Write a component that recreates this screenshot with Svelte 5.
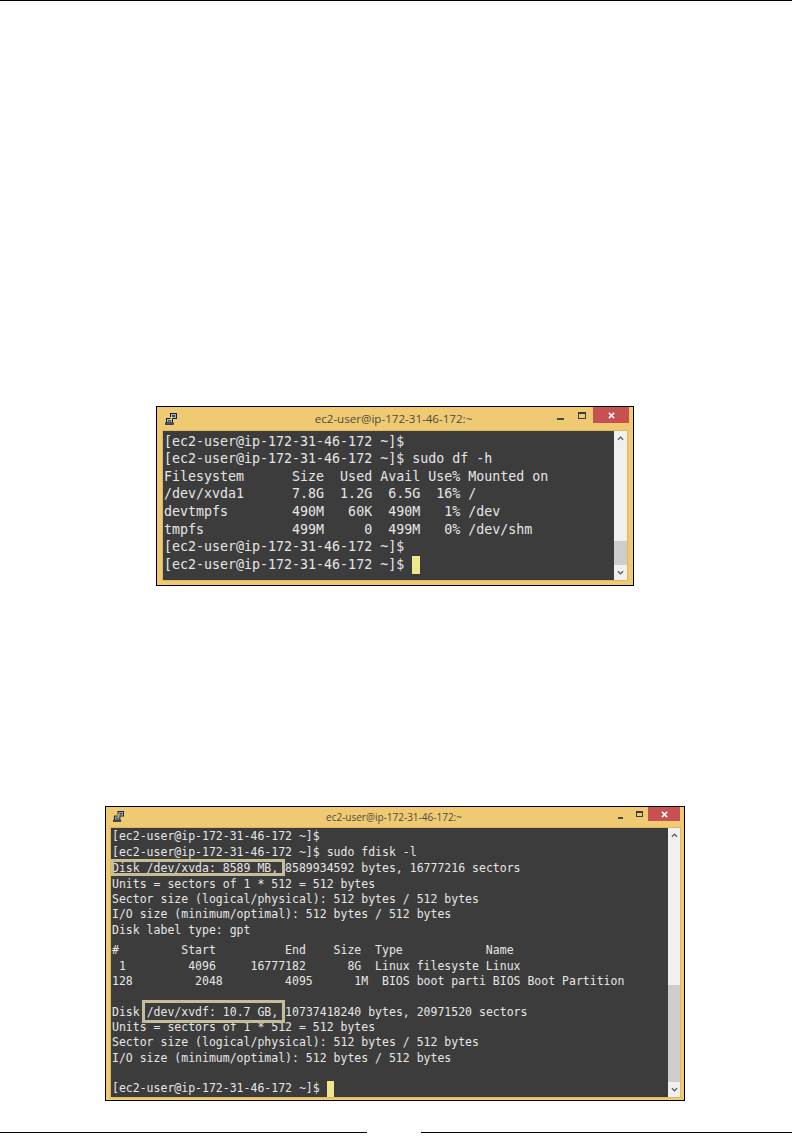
<script>
	const prompt = '[ec2-user@ip-172-31-46-172 ~]$';
	const title = 'ec2-user@ip-172-31-46-172:~';

	const dfLines = [
		prompt,
		prompt + ' sudo df -h',
		'Filesystem      Size  Used Avail Use% Mounted on',
		'/dev/xvda1      7.8G  1.2G  6.5G  16% /',
		'devtmpfs        490M   60K  490M   1% /dev',
		'tmpfs           499M     0  499M   0% /dev/shm',
		prompt
	];

	const fdiskTop = [prompt, prompt + ' sudo fdisk -l'];
	const fdiskInfo = [
		'Units = sectors of 1 * 512 = 512 bytes',
		'Sector size (logical/physical): 512 bytes / 512 bytes',
		'I/O size (minimum/optimal): 512 bytes / 512 bytes'
	];
	const fdiskTable = [
		'#         Start          End    Size  Type            Name',
		' 1         4096     16777182      8G  Linux filesyste Linux',
		'128         2048         4095      1M  BIOS boot parti BIOS Boot Partition'
	];
</script>

{#snippet titlebar()}
	<div class="titlebar">
		<svg class="putty" viewBox="0 0 12 12" aria-hidden="true">
			<rect x="5.5" y="0.5" width="6" height="5" fill="#aab4c8" stroke="#141a2a" />
			<rect x="7" y="2" width="3" height="2" fill="#2c4478" />
			<rect x="1.5" y="5.5" width="6" height="4.5" fill="#aab4c8" stroke="#141a2a" />
			<rect x="3" y="7" width="3" height="1.5" fill="#2c4478" />
			<rect x="0.5" y="10" width="8" height="1.5" fill="#70778a" stroke="#141a2a" stroke-width="0.7" />
			<path d="M8 2.5 L4.5 5 L6 5.5 L3.5 8 L7.8 5.5 L6.3 4.8 Z" fill="#ffe800" />
		</svg>
		<span class="title">{title}</span>
		<div class="controls">
			<span class="min"></span>
			<span class="max"></span>
			<span class="close">
				<svg viewBox="0 0 8 8" aria-hidden="true">
					<path d="M1 1 L7 7 M7 1 L1 7" stroke="#fff" stroke-width="1.7" />
				</svg>
			</span>
		</div>
	</div>
{/snippet}

{#snippet scrollbar()}
	<div class="scrollbar">
		<svg class="arrow" viewBox="0 0 8 5" aria-hidden="true">
			<path d="M1 4 L4 1 L7 4" fill="none" stroke="#606060" stroke-width="1.5" />
		</svg>
		<div class="track"><div class="thumb"></div></div>
		<svg class="arrow" viewBox="0 0 8 5" aria-hidden="true">
			<path d="M1 1 L4 4 L7 1" fill="none" stroke="#606060" stroke-width="1.5" />
		</svg>
	</div>
{/snippet}

<div class="page">
	<div class="top-rule"></div>

	<section class="window df">
		{@render titlebar()}
		<div class="content">
			<div class="terminal">
				{#each dfLines as line}
					<div class="line">{line}</div>
				{/each}
				<div class="line">{prompt} <span class="cursor"></span></div>
			</div>
			{@render scrollbar()}
		</div>
	</section>

	<section class="window fdisk">
		{@render titlebar()}
		<div class="content">
			<div class="terminal">
				{#each fdiskTop as line}
					<div class="line">{line}</div>
				{/each}
				<div class="line disk-a"><span class="mark mark-a">{'Disk /dev/xvda: 8589 MB, '}</span>8589934592 bytes, 16777216 sectors</div>
				{#each fdiskInfo as line}
					<div class="line">{line}</div>
				{/each}
				<div class="line">Disk label type: gpt</div>
				<div class="table">
					{#each fdiskTable as line}
						<div class="line">{line}</div>
					{/each}
				</div>
				<div class="line">&nbsp;</div>
				<div class="line">Disk <span class="mark mark-b">{'/dev/xvdf: 10.7 GB, '}</span>10737418240 bytes, 20971520 sectors</div>
				{#each fdiskInfo as line}
					<div class="line">{line}</div>
				{/each}
				<div class="line">&nbsp;</div>
				<div class="line">{prompt} <span class="cursor"></span></div>
			</div>
			{@render scrollbar()}
		</div>
	</section>

	<footer class="bottom-rule">
		<div class="rule-left"></div>
		<div class="rule-right"></div>
	</footer>
</div>

<style>
	:global(body) {
		margin: 0;
		background: #fff;
	}

	.page {
		width: 792px;
		height: 1142px;
		display: flex;
		flex-direction: column;
		overflow: hidden;
	}

	.top-rule {
		height: 1px;
		background: #000;
	}

	.window {
		box-sizing: border-box;
		border: 1px solid #000;
		background: #f0ca73;
	}

	.df {
		width: 478px;
		height: 180px;
		margin: 405px 0 0 156px;
		padding: 0 6px 4px 6px;
	}

	.fdisk {
		width: 580px;
		height: 295px;
		margin: 220px 0 0 105px;
		padding: 0 4px 3px 5px;
	}

	.titlebar {
		display: grid;
		grid-template-columns: 1fr auto 1fr;
		align-items: start;
	}

	.df .titlebar {
		height: 24px;
	}

	.fdisk .titlebar {
		height: 21px;
	}

	.putty {
		display: block;
		width: 12px;
		height: 12px;
	}

	.df .putty {
		margin: 6px 0 0 2px;
	}

	.fdisk .putty {
		margin: 4px 0 0 2px;
		width: 11px;
		height: 11px;
	}

	.title {
		font-family: 'Open Sans', sans-serif;
		color: #4d4a40;
		white-space: nowrap;
	}

	.df .title {
		font-size: 11.6px;
		line-height: 24px;
		padding-right: 3px;
	}

	.fdisk .title {
		font-size: 10px;
		line-height: 20px;
		padding-right: 3px;
	}

	.controls {
		display: flex;
		justify-content: flex-end;
		align-items: flex-start;
	}

	.min {
		height: 2px;
		background: #4a4a4a;
	}

	.df .min {
		width: 7px;
		margin: 11px 14px 0 0;
	}

	.fdisk .min {
		width: 5px;
		margin: 10px 13px 0 0;
	}

	.max {
		box-sizing: border-box;
		border: 1px solid #3c3c3c;
		border-top-width: 2px;
	}

	.df .max {
		width: 8px;
		height: 7px;
		margin: 5px 7px 0 0;
	}

	.fdisk .max {
		width: 7px;
		height: 6px;
		margin: 4px 5px 0 0;
	}

	.close {
		display: flex;
		align-items: center;
		justify-content: center;
		background: #c75050;
	}

	.df .close {
		width: 36px;
		height: 16px;
		margin-right: -2px;
	}

	.fdisk .close {
		width: 32px;
		height: 14px;
	}

	.close svg {
		width: 7px;
		height: 7px;
	}

	.content {
		display: flex;
		box-shadow: 0 0 0 1px #dcb862;
	}

	.terminal {
		flex: 1;
		min-width: 0;
		box-sizing: border-box;
		background: #3c3c3c;
		color: #e6e6e6;
		font-family: 'DejaVu Sans Mono', monospace;
		overflow: hidden;
		padding-left: 1px;
	}

	.df .terminal {
		height: 149px;
		padding-top: 1.5px;
		font-size: 13.3px;
	}

	.fdisk .terminal {
		height: 269px;
		padding-top: 1.4px;
		font-size: 11.5px;
	}

	.line {
		white-space: pre;
	}

	.df .line {
		height: 17.67px;
		line-height: 17.67px;
	}

	.fdisk .line {
		height: 15.33px;
		line-height: 15.33px;
	}

	.disk-a {
		margin-top: 1.2px;
	}

	.table {
		margin-top: 5.4px;
	}

	.mark {
		position: relative;
	}

	.mark::after {
		content: '';
		position: absolute;
		box-sizing: border-box;
		border: 3px solid #c4bd97;
	}

	.mark-a::after {
		left: -1px;
		right: 0;
		top: -2px;
		height: 17px;
	}

	.mark-b::after {
		left: -5px;
		right: 0;
		top: -5px;
		height: 23px;
	}

	.cursor {
		display: inline-block;
		vertical-align: top;
		background: #f0e68c;
	}

	.df .cursor {
		width: 8px;
		height: 17.67px;
	}

	.fdisk .cursor {
		width: 7px;
		height: 15.33px;
	}

	.scrollbar {
		display: flex;
		flex-direction: column;
		flex-shrink: 0;
		background: #f0f0f0;
	}

	.df .scrollbar {
		width: 13px;
	}

	.fdisk .scrollbar {
		width: 12px;
	}

	.arrow {
		display: block;
		width: 7px;
		height: 5px;
		margin: 5px auto;
		flex-shrink: 0;
	}

	.track {
		flex: 1;
		display: flex;
		align-items: flex-end;
	}

	.thumb {
		width: 100%;
		background: #cdcdcd;
	}

	.df .thumb {
		height: 24px;
	}

	.fdisk .thumb {
		height: 97px;
	}

	.bottom-rule {
		display: flex;
		gap: 54px;
		margin-top: 31px;
		height: 1px;
	}

	.rule-left {
		width: 367px;
		background: #000;
	}

	.rule-right {
		flex: 1;
		background: #000;
	}
</style>
